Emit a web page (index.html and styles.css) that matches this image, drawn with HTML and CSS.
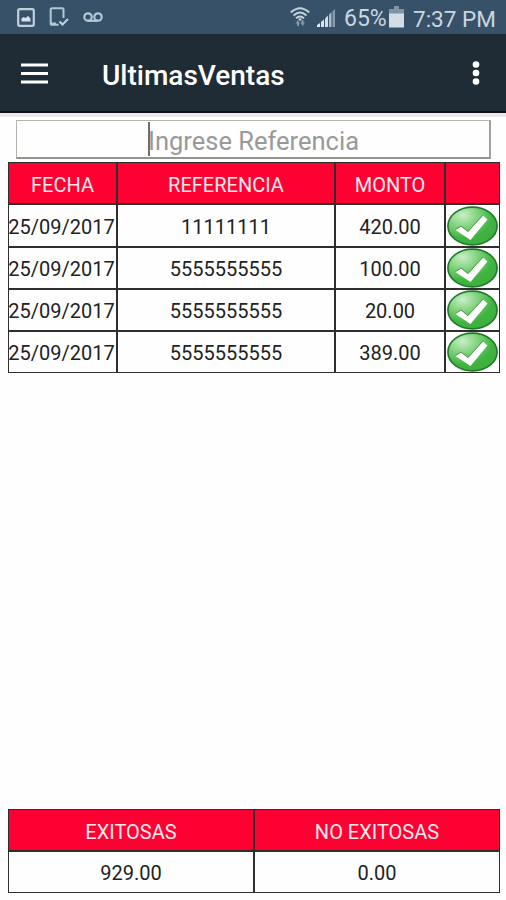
FILE: index.html
```
<!DOCTYPE html>
<html lang="es">
<head>
    <meta charset="UTF-8">
    <meta name="viewport" content="width=device-width, initial-scale=1.0">
    <title>UltimasVentas</title>
    <link rel="stylesheet" href="styles.css">
</head>
<body>
    <!-- Iconos compartidos -->
    <svg class="defs" width="0" height="0">
        <defs>
            <radialGradient id="verde" cx="0.3" cy="0.22" r="0.85">
                <stop offset="0" stop-color="#c9efc7"/>
                <stop offset="0.4" stop-color="#79d077"/>
                <stop offset="0.7" stop-color="#40b542"/>
                <stop offset="1" stop-color="#3cae3e"/>
            </radialGradient>
            <symbol id="ok" viewBox="0 0 52 40">
                <ellipse cx="25.5" cy="20" rx="24.6" ry="18.9" fill="url(#verde)" stroke="#217a2b" stroke-width="1.6"/>
                <path d="M8.500 24l5.500-3.500 7 5.500L36 9.500l4.500 4L23.500 34z" fill="#fff"/>
                <path d="M8.500 23.500l5.500-3.500 7 5.500L36 9" fill="none" stroke="#46884a" stroke-width="0.8"/>
            </symbol>
        </defs>
    </svg>

    <div class="status-bar">
        <div class="status-left">
            <svg width="18" height="19" viewBox="0 0 18 19">
                <rect x="1.200" y="1.200" width="15.600" height="16.600" rx="1.500" fill="none" stroke="#bfd0dc" stroke-width="2.200"/>
                <path d="M4.500 13.500v-3l2-1.500 2 1 2.500-2 2.500 2.500v3z" fill="#d5e1e9"/>
            </svg>
            <svg width="20" height="20" viewBox="0 0 20 20">
                <path d="M14.500 11V2.500A1.300 1.300 0 0 0 13.200 1.200H3A1.300 1.300 0 0 0 1.700 2.500v14A1.300 1.300 0 0 0 3 17.800h6.500" fill="none" stroke="#b3c7d4" stroke-width="2"/>
                <path d="M2 15.500h5v2.500H2z" fill="#b3c7d4"/>
                <path d="M10.500 14.500l3 3 5.500-5.500" fill="none" stroke="#c3d3de" stroke-width="2"/>
            </svg>
            <svg width="20" height="11" viewBox="0 0 20 11">
                <g fill="none" stroke="#b3c7d4" stroke-width="2.200">
                    <circle cx="5" cy="5" r="3.700"/>
                    <circle cx="15" cy="5" r="3.700"/>
                    <path d="M5 8.800h10"/>
                </g>
            </svg>
        </div>
        <div class="status-right">
            <svg class="wifi" width="20" height="20" viewBox="0 0 20 20">
                <g fill="none" stroke="#c3d1db" stroke-width="1.900">
                    <path d="M0.800 5.500Q10-3 19.200 5.500"/>
                    <path d="M3.500 8.500Q10 2.500 16.500 8.500"/>
                    <path d="M6 11.300Q10 7.500 14 11.300"/>
                </g>
                <path d="M8 11.800q2-1.200 4 0l-2 2.400z" fill="#c3d1db"/>
                <path d="M5.500 16.500L8 13l2 3.500H9V19H7v-2.500zM10.500 15.500h1V13h2v2.500h1.500L12.800 19z" fill="#8299a9"/>
            </svg>
            <svg class="signal" width="19" height="18" viewBox="0 0 19 18">
                <path d="M0 18v-2l3-2v4z" fill="#e3eaef"/>
                <path d="M4 18v-5l3-2.500V18z" fill="#dbe3e9"/>
                <path d="M8 18V9.500l3-3V18z" fill="#d2dce3"/>
                <path d="M12 18V5.500L14.500 3v15z" fill="#a9bac6"/>
                <path d="M15.500 18V2.300L18 0v18z" fill="#849bab"/>
            </svg>
            <span class="percent">65%</span>
            <svg class="battery" width="15" height="22" viewBox="0 0 15 22">
                <path d="M5 0h5v3h5v5H0V3h5z" fill="#7f95a5"/>
                <rect y="7.500" width="15" height="14" fill="#d3dde5"/>
            </svg>
            <span class="clock">7:37 PM</span>
        </div>
    </div>

    <header class="app-bar">
        <svg class="menu" width="27" height="21" viewBox="0 0 27 21">
            <path d="M0 2h27M0 10.500h27M0 19h27" stroke="#fff" stroke-width="2.800"/>
        </svg>
        <h1 class="title">UltimasVentas</h1>
        <svg class="more" width="8" height="24" viewBox="0 0 8 24">
            <g fill="#fff">
                <circle cx="4" cy="3.500" r="3.300"/>
                <circle cx="4" cy="12" r="3.300"/>
                <circle cx="4" cy="20.500" r="3.300"/>
            </g>
        </svg>
    </header>

    <main class="content">
        <div class="search">
            <span class="cursor"></span>
            <span class="placeholder">Ingrese Referencia</span>
        </div>

        <div class="tabla ventas">
            <div class="th">FECHA</div>
            <div class="th">REFERENCIA</div>
            <div class="th">MONTO</div>
            <div class="th"></div>

            <div class="td fecha">25/09/2017</div>
            <div class="td">11111111</div>
            <div class="td">420.00</div>
            <div class="td"><svg class="ok"><use href="#ok"/></svg></div>

            <div class="td fecha">25/09/2017</div>
            <div class="td">5555555555</div>
            <div class="td">100.00</div>
            <div class="td"><svg class="ok"><use href="#ok"/></svg></div>

            <div class="td fecha">25/09/2017</div>
            <div class="td">5555555555</div>
            <div class="td">20.00</div>
            <div class="td"><svg class="ok"><use href="#ok"/></svg></div>

            <div class="td fecha">25/09/2017</div>
            <div class="td">5555555555</div>
            <div class="td">389.00</div>
            <div class="td"><svg class="ok"><use href="#ok"/></svg></div>
        </div>

        <div class="tabla totales">
            <div class="th">EXITOSAS</div>
            <div class="th">NO EXITOSAS</div>
            <div class="td">929.00</div>
            <div class="td">0.00</div>
        </div>
    </main>
</body>
</html>
```

FILE: styles.css
```
* {
    margin: 0;
    padding: 0;
    box-sizing: border-box;
}

body {
    font-family: Roboto, 'Liberation Sans', sans-serif;
    background: #fefefe;
    height: 900px;
    display: flex;
    flex-direction: column;
    overflow: hidden;
}

svg {
    display: block;
    flex-shrink: 0;
}

.defs {
    position: absolute;
}

/* Barra de estado */
.status-bar {
    height: 34px;
    background: #375169;
    display: flex;
    justify-content: space-between;
    padding: 0 11px 0 17px;
    color: #cbd7e0;
    font-size: 23px;
    line-height: 36px;
}

.status-left {
    display: flex;
    align-items: center;
    gap: 14px;
}

.status-right {
    display: flex;
    align-items: center;
    white-space: nowrap;
}

.signal {
    margin: 2px 8px 0 7px;
}

.percent {
    width: 42px;
    padding-top: 3px;
}

.battery {
    margin: 0 9px 0 3px;
}

.clock {
    width: 82px;
    font-size: 22.5px;
    padding-top: 3px;
}

/* Barra de la app */
.app-bar {
    height: 79px;
    background: #1f2c36;
    border-bottom: 2px solid #0b1216;
    display: flex;
    align-items: center;
    padding: 1px 26px 0 21px;
}

.title {
    margin-left: 54px;
    padding-top: 4px;
    flex: 1;
    color: #fff;
    font-size: 28px;
    font-weight: 500;
}

.content {
    flex: 1;
    display: flex;
    flex-direction: column;
    padding: 3px 6px 7px 8px;
    border-top: 4px solid #e9e7e9;
}

.search {
    height: 39px;
    margin: 0 9px 3px 8px;
    border: 1px solid #b4b4ae;
    border-right: 2px solid #a0a09c;
    border-bottom: 2px solid #949490;
    display: flex;
    align-items: center;
    padding-left: 131px;
}

.cursor {
    width: 2px;
    height: 34px;
    background: #6e6e6e;
}

.placeholder {
    color: #999;
    font-size: 25.5px;
    line-height: 36px;
    padding-top: 3px;
    margin-left: -2px;
    white-space: nowrap;
}

/* Tablas: el fondo se ve como borde entre celdas */
.tabla {
    width: 492px;
    display: grid;
    gap: 2px;
    padding: 1px;
    background: #2e2e2e;
    font-size: 20px;
}

.ventas {
    grid-template-columns: 107px 216px 108px 53px;
    grid-template-rows: 40px 41px 40px 40px 40px;
}

.totales {
    grid-template-columns: 244px 244px;
    grid-template-rows: 40px 40px;
    margin-top: auto;
}

.th,
.td {
    display: flex;
    align-items: center;
    justify-content: center;
    white-space: nowrap;
    padding-top: 2px;
}

.th {
    background: #ff0033;
    color: #ffe9ec;
    padding-top: 3px;
}

.td {
    background: #fefefe;
    color: #222;
}

.fecha {
    padding-right: 2px;
}

.ok {
    width: 52px;
    height: 40px;
    margin-top: -2px;
}
```
